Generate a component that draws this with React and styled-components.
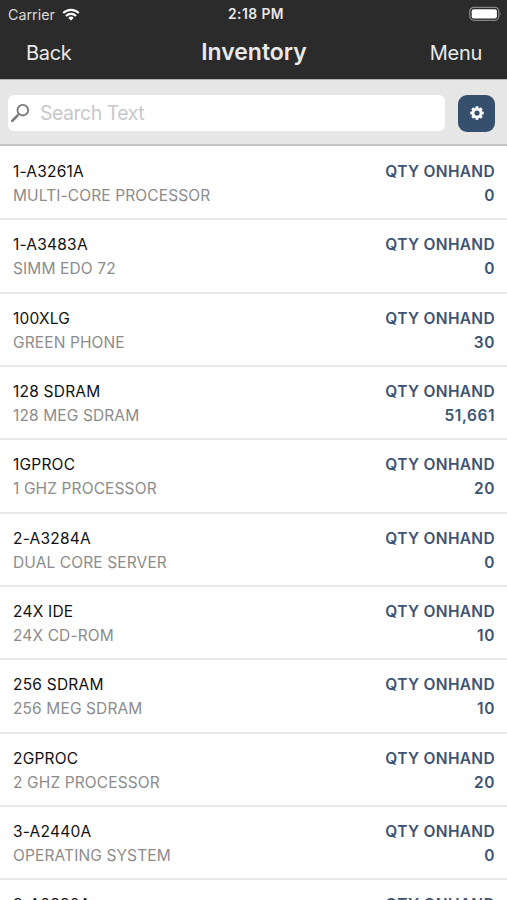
import React from 'react';
import styled, { createGlobalStyle } from 'styled-components';


const GlobalStyle = createGlobalStyle`
  * {
    box-sizing: border-box;
  }
  body {
    margin: 0;
    background: #fff;
    font-family: Inter, 'Liberation Sans', sans-serif;
  }
`;

const Screen = styled.div`
  height: 100vh;
  overflow: hidden;
  display: flex;
  flex-direction: column;
`;

const Header = styled.header`
  height: 79px;
  flex-shrink: 0;
  background: #2b2b2b;
  color: #e9e9e9;
`;

const StatusBar = styled.div`
  height: 27px;
  padding: 0 6px 0 8px;
  display: grid;
  grid-template-columns: 1fr auto 1fr;
  align-items: center;
`;

const Carrier = styled.div`
  display: flex;
  align-items: center;
  gap: 7px;
  font-size: 14.3px;
  line-height: 27px;
  color: #d8d8d8;
`;

const Time = styled.div`
  margin-left: 3px;
  font-size: 13.8px;
  font-weight: 600;
  line-height: 28px;
  letter-spacing: 0.45px;
`;

const BatteryIcon = styled.svg`
  justify-self: end;
  margin-right: -2px;
`;

const NavBar = styled.div`
  height: 52px;
  padding: 0 25px 0 26px;
  display: grid;
  grid-template-columns: 1fr auto 1fr;
`;

const NavButton = styled.button`
  justify-self: ${props => props.$end ? 'end' : 'start'};
  padding: 0;
  border: 0;
  background: none;
  color: inherit;
  font: inherit;
  font-size: 20px;
  line-height: 51px;
  letter-spacing: -0.3px;
`;

const Title = styled.h1`
  margin: 0;
  font-size: 23px;
  font-weight: 600;
  line-height: 51px;
`;

const SearchBar = styled.div`
  height: 67px;
  flex-shrink: 0;
  padding: 2px 12px 0 8px;
  display: flex;
  align-items: center;
  gap: 13px;
  background: #e6e6e6;
  border-top: 1px solid #b5b5b5;
  border-bottom: 2px solid #c4c4c4;
`;

const SearchField = styled.label`
  flex: 1;
  height: 36px;
  padding-left: 2px;
  display: flex;
  align-items: center;
  gap: 10px;
  background: #fff;
  border-radius: 6px;
`;

const SearchInput = styled.input`
  flex: 1;
  min-width: 0;
  padding: 0;
  border: 0;
  outline: 0;
  background: none;
  font: inherit;
  font-size: 19.5px;
  letter-spacing: -0.5px;
  &::placeholder {
    color: #c8c8cb;
    opacity: 1;
  }
`;

const SettingsButton = styled.button`
  width: 37px;
  height: 37px;
  padding: 0;
  display: flex;
  align-items: center;
  justify-content: center;
  border: 0;
  border-radius: 9px;
  background: #364f6c;
`;

const List = styled.div`
  flex: 1;
  padding-top: 1px;
  overflow: hidden;
`;

const Row = styled.div`
  height: 73.33px;
  padding: 13px 12px 0 13px;
  display: flex;
  justify-content: space-between;
  border-bottom: 2px solid #e8e8e8;
  font-size: 15.5px;
  line-height: 24px;
`;

const Code = styled.div`
  color: #111;
  letter-spacing: 0.22px;
`;

const Description = styled.div`
  color: #8c8c8c;
  letter-spacing: 0.12px;
`;

const Quantity = styled.div`
  color: #3d5472;
  font-weight: 600;
  letter-spacing: 0.33px;
  text-align: right;
`;

const Amount = styled.div`
  letter-spacing: 0.55px;
`;


const items = [
  { code: '1-A3261A', description: 'MULTI-CORE PROCESSOR', qty: '0' },
  { code: '1-A3483A', description: 'SIMM EDO 72', qty: '0' },
  { code: '100XLG', description: 'GREEN PHONE', qty: '30' },
  { code: '128 SDRAM', description: '128 MEG SDRAM', qty: '51,661' },
  { code: '1GPROC', description: '1 GHZ PROCESSOR', qty: '20' },
  { code: '2-A3284A', description: 'DUAL CORE SERVER', qty: '0' },
  { code: '24X IDE', description: '24X CD-ROM', qty: '10' },
  { code: '256 SDRAM', description: '256 MEG SDRAM', qty: '10' },
  { code: '2GPROC', description: '2 GHZ PROCESSOR', qty: '20' },
  { code: '3-A2440A', description: 'OPERATING SYSTEM', qty: '0' },
  { code: '3-A2880A', description: '', qty: '' },
];

const WifiIcon = () => (
  <svg width="18" height="13" viewBox="0 0 18 13" fill="none" stroke="#fff" strokeWidth="2.1">
    <path d="M1.2 5.1a11 11 0 0 1 15.6 0" />
    <path d="M4 8a7 7 0 0 1 10 0" />
    <path d="M9 12.6 6.3 9.9a3.9 3.9 0 0 1 5.4 0z" fill="#fff" stroke="none" />
  </svg>
);

const SearchIcon = () => (
  <svg width="20" height="20" viewBox="0 0 20 20" fill="none" stroke="#777">
    <circle cx="12.8" cy="7.2" r="5.3" strokeWidth="1.8" />
    <path d="M8.8 11.2 7 13" strokeWidth="1.6" />
    <path d="M7.2 12.8 2.2 17.8" strokeWidth="2.6" strokeLinecap="round" />
  </svg>
);

const GearIcon = () => (
  <svg width="14" height="14" viewBox="-7 -7 14 14">
    <g fill="#fff">
      {[0, 45, 90, 135].map(angle => (
        <rect key={angle} x="-1.5" y="-6.7" width="3" height="13.4" rx="0.5" transform={`rotate(${angle})`} />
      ))}
    </g>
    <circle r="3.9" fill="#364f6c" stroke="#fff" strokeWidth="2.6" />
  </svg>
);

const ItemRow = ({ item }) => {

  const { code, description, qty } = item;

  return (
    <Row>
      <div>
        <Code>{code}</Code>
        <Description>{description}</Description>
      </div>
      <Quantity>
        <div>QTY ONHAND</div>
        <Amount>{qty}</Amount>
      </Quantity>
    </Row>
  )
}

const App = () => (
  <Screen>
    <GlobalStyle />
    <Header>
      <StatusBar>
        <Carrier>Carrier <WifiIcon /></Carrier>
        <Time>2:18 PM</Time>
        <BatteryIcon width="34" height="16" viewBox="0 0 34 16">
          <rect x="0.8" y="1.3" width="29" height="13" rx="4" fill="none" stroke="#858585" strokeWidth="1.3" />
          <rect x="2.7" y="3.2" width="25.2" height="9.2" rx="2" fill="#fff" />
          <path d="M30.8 5.5q1.8 2.3 0 4.6z" fill="#858585" />
        </BatteryIcon>
      </StatusBar>
      <NavBar>
        <NavButton>Back</NavButton>
        <Title>Inventory</Title>
        <NavButton $end>Menu</NavButton>
      </NavBar>
    </Header>
    <SearchBar>
      <SearchField>
        <SearchIcon />
        <SearchInput placeholder="Search Text" />
      </SearchField>
      <SettingsButton aria-label="Settings"><GearIcon /></SettingsButton>
    </SearchBar>
    <List>
      {items.map(item => <ItemRow key={item.code} item={item} />)}
    </List>
  </Screen>
)

export default App;
